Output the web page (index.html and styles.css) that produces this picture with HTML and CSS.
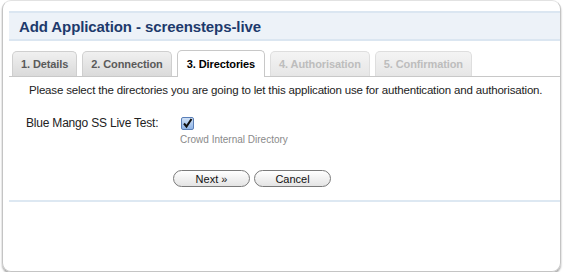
FILE: index.html
```html
<!DOCTYPE html>
<html lang="en">
<head>
    <meta charset="UTF-8">
    <title>Add Application</title>
    <link rel="stylesheet" href="styles.css">
</head>
<body>
    <div class="window">
        <div class="page-header">
            <h1>Add Application - screensteps-live</h1>
        </div>
        <ul class="tabs">
            <li class="tab">1. Details</li>
            <li class="tab">2. Connection</li>
            <li class="tab active">3. Directories</li>
            <li class="tab disabled">4. Authorisation</li>
            <li class="tab disabled">5. Confirmation</li>
        </ul>
        <div class="content">
            <p class="intro">Please select the directories you are going to let this application use for authentication and authorisation.</p>
            <div class="field">
                <label class="field-label">Blue Mango SS Live Test:</label>
                <div class="field-value">
                    <span class="checkbox">
                        <svg width="11" height="11" viewBox="0 0 11 11"><path d="M2 5.5 L4.5 8.5 L9.5 1" fill="none" stroke="#111" stroke-width="2"/></svg>
                    </span>
                    <div class="hint">Crowd Internal Directory</div>
                </div>
            </div>
            <div class="buttons">
                <button class="button">Next &raquo;</button>
                <button class="button">Cancel</button>
            </div>
        </div>
        <div class="divider"></div>
    </div>
</body>
</html>
```
FILE: styles.css
```css
body {
    font-family: "Liberation Sans", Arial, sans-serif;
    background-color: #fff;
    margin: 0;
}
.window {
    margin: 0 3px 0 2px;
    height: 272px;
    border: 1px solid #c4c4c4;
    border-top-color: #e2e2e2;
    border-radius: 9px;
    box-shadow: 0 2px 2px rgba(0, 0, 0, 0.35);
    box-sizing: border-box;
    padding-top: 10px;
    padding-left: 6px;
}
.page-header {
    background-color: #edf2f8;
    border-top: 2px solid #dbe6f1;
    border-bottom: 2px solid #dbe6f1;
    height: 26px;
    display: flex;
    align-items: center;
}
.page-header h1 {
    margin: 1px 0 0 10px;
    font-size: 15px;
    letter-spacing: -0.1px;
    color: #1d3a6c;
}
.tabs {
    list-style: none;
    margin: 10px 0 0 0;
    padding: 0 0 0 3px;
    display: flex;
    gap: 5px;
    border-bottom: 1px solid #c8c8c8;
    height: 25px;
}
.tab {
    height: 24px;
    padding: 0 8px;
    display: flex;
    align-items: center;
    font-size: 11px;
    font-weight: bold;
    letter-spacing: -0.1px;
    color: #5a5a5a;
    background: linear-gradient(#f0f0f0, #dadada);
    border: 1px solid #cfcfcf;
    border-bottom: none;
    border-radius: 5px 5px 0 0;
}
.tab.active {
    background: #fff;
    color: #000;
    height: 26px;
    margin-top: -1px;
    border-color: #c8c8c8;
    padding: 0 9px;
}
.tab.disabled {
    color: #bdbdbd;
    background: linear-gradient(#f4f4f4, #e6e6e6);
    border-color: #dedede;
}
.content {
    padding: 7px 0 0 20px;
}
.intro {
    margin: 0;
    font-size: 11.5px;
    letter-spacing: -0.17px;
    white-space: nowrap;
    color: #222;
}
.field {
    display: flex;
    align-items: flex-start;
    margin: 20px 0 0 -3px;
}
.field-label {
    width: 154px;
    font-size: 12px;
    letter-spacing: -0.2px;
    color: #222;
}
.checkbox {
    display: flex;
    align-items: center;
    justify-content: center;
    width: 11px;
    height: 11px;
    margin: 1px 0 0 1px;
    border: 1px solid #5a7fb8;
    border-radius: 2px;
    background: linear-gradient(#cfe0f5, #8fb4e6);
}
.hint {
    margin-top: 4px;
    font-size: 10px;
    color: #8a8a8a;
}
.buttons {
    display: flex;
    gap: 4px;
    margin: 25px 0 0 144px;
}
.button {
    width: 77px;
    height: 17px;
    padding: 0;
    font-family: "Liberation Sans", Arial, sans-serif;
    font-size: 11px;
    color: #111;
    background: linear-gradient(#ffffff, #e4e4e4);
    border: 1px solid #7a7a7a;
    border-radius: 9px;
}
.divider {
    margin-top: 13px;
    border-top: 2px solid #dde8f2;
}
```
